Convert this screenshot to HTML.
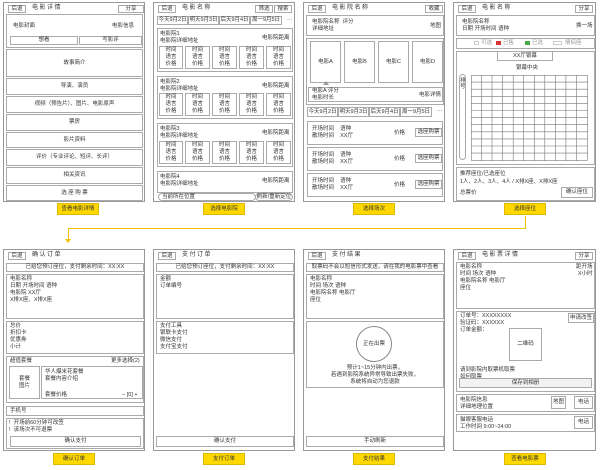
<!DOCTYPE html><html><head><meta charset="utf-8"><style>
*{margin:0;padding:0;box-sizing:border-box}
body{width:600px;height:470px;background:#fff;position:relative;overflow:hidden;font-family:"Liberation Sans","Noto Sans CJK SC",sans-serif;font-size:5.5px;color:#333;line-height:1.2}
.p{position:absolute;border:1px solid #999;background:#fff}
.a{position:absolute;white-space:nowrap}
.b{position:absolute;border:1px solid #aaa;background:#fff}
.c{display:flex;align-items:center;justify-content:center}
.t{font-size:6px;letter-spacing:1.5px;color:#333}
.lab{position:absolute;width:42px;height:12px;background:#ffd800;border:1px solid #e0b800;font-size:5.5px;display:flex;align-items:center;justify-content:center;color:#333}
.pill{border-radius:5px}
</style></head><body>

<!-- connector -->
<div class="a" style="left:525px;top:216px;width:1px;height:13px;background:#f2c300"></div>
<div class="a" style="left:68px;top:228px;width:458px;height:1px;background:#f2c300"></div>
<div class="a" style="left:68px;top:228px;width:1px;height:12px;background:#f2c300"></div>
<div class="a" style="left:65px;top:239px;width:0;height:0;border-left:3.5px solid transparent;border-right:3.5px solid transparent;border-top:4px solid #f2c300"></div>

<!-- Panel 1 -->
<div class="p" style="left:3px;top:2px;width:142px;height:200px">
<div class="b c" style="left:4px;top:2px;width:18px;height:8px">后退</div>
<div class="a t" style="left:28px;top:2px">电影详情</div>
<div class="b c" style="left:114px;top:2px;width:26px;height:8px">分享</div>
<div class="b" style="left:2px;top:11px;width:137px;height:34px"></div>
<div class="a" style="left:9px;top:20px">电影封面</div>
<div class="a" style="left:108px;top:20px">电影信息</div>
<div class="b c" style="left:6px;top:33px;width:68px;height:9px">想看</div>
<div class="b c" style="left:75px;top:33px;width:63px;height:9px">写影评</div>
<div class="b c" style="left:2px;top:46px;width:137px;height:28px">故事简介</div>
<div class="b c" style="left:2px;top:75px;width:137px;height:17px">导演、演员</div>
<div class="b c" style="left:2px;top:93px;width:137px;height:17px">视频（预告片）、图片、电影原声</div>
<div class="b c" style="left:2px;top:111px;width:137px;height:17px">票房</div>
<div class="b c" style="left:2px;top:129px;width:137px;height:16px">影片资料</div>
<div class="b c" style="left:2px;top:146px;width:137px;height:17px">评价（专业评论、短评、长评）</div>
<div class="b c" style="left:2px;top:164px;width:137px;height:17px">相关资讯</div>
<div class="b c" style="left:2px;top:182px;width:137px;height:16px">选 座 购 票</div>
</div>
<div class="lab" style="left:57px;top:203px">查看电影详情</div>

<!-- Panel 2 -->
<div class="p" style="left:153px;top:2px;width:142px;height:200px">
<div class="b c" style="left:4px;top:2px;width:18px;height:8px">后退</div>
<div class="a t" style="left:28px;top:2px">电影名称</div>
<div class="b c" style="left:101px;top:2px;width:18px;height:8px">筛选</div>
<div class="b c" style="left:120px;top:2px;width:18px;height:8px">搜索</div>
<div class="b c" style="left:3px;top:13px;width:31px;height:9px">今天9月2日</div>
<div class="b c" style="left:34px;top:13px;width:31px;height:9px">明天9月3日</div>
<div class="b c" style="left:65px;top:13px;width:31px;height:9px">后天9月4日</div>
<div class="b c" style="left:96px;top:13px;width:32px;height:9px">周一9月5日</div>
<div class="a" style="left:133px;top:14px">···</div>

<div class="b" style="left:3px;top:25px;width:136px;height:44px"></div>
<div class="a" style="left:6px;top:28px">电影院1<br>电影院详细地址</div><div class="a" style="left:108px;top:32px">电影院距离</div>
<div class="b c" style="left:5px;top:43px;width:24px;height:23px;line-height:1.25;text-align:center">时间<br>语言<br>价格</div>
<div class="b c" style="left:31px;top:43px;width:25px;height:23px;text-align:center;line-height:1.25">时间<br>语言<br>价格</div>
<div class="b c" style="left:58px;top:43px;width:25px;height:23px;text-align:center;line-height:1.25">时间<br>语言<br>价格</div>
<div class="b c" style="left:85px;top:43px;width:25px;height:23px;text-align:center;line-height:1.25">时间<br>语言<br>价格</div>
<div class="b c" style="left:112px;top:43px;width:25px;height:23px;text-align:center;line-height:1.25">时间<br>语言<br>价格</div>

<div class="b" style="left:3px;top:73px;width:136px;height:43px"></div>
<div class="a" style="left:6px;top:76px">电影院2<br>电影院详细地址</div><div class="a" style="left:108px;top:80px">电影院距离</div>
<div class="b c" style="left:5px;top:90px;width:24px;height:23px;text-align:center;line-height:1.25">时间<br>语言<br>价格</div>
<div class="b c" style="left:31px;top:90px;width:25px;height:23px;text-align:center;line-height:1.25">时间<br>语言<br>价格</div>
<div class="b c" style="left:58px;top:90px;width:25px;height:23px;text-align:center;line-height:1.25">时间<br>语言<br>价格</div>
<div class="b c" style="left:85px;top:90px;width:25px;height:23px;text-align:center;line-height:1.25">时间<br>语言<br>价格</div>
<div class="b c" style="left:112px;top:90px;width:25px;height:23px;text-align:center;line-height:1.25">时间<br>语言<br>价格</div>

<div class="b" style="left:3px;top:120px;width:136px;height:44px"></div>
<div class="a" style="left:6px;top:123px">电影院3<br>电影院详细地址</div><div class="a" style="left:108px;top:127px">电影院距离</div>
<div class="b c" style="left:5px;top:138px;width:24px;height:23px;text-align:center;line-height:1.25">时间<br>语言<br>价格</div>
<div class="b c" style="left:31px;top:138px;width:25px;height:23px;text-align:center;line-height:1.25">时间<br>语言<br>价格</div>
<div class="b c" style="left:58px;top:138px;width:25px;height:23px;text-align:center;line-height:1.25">时间<br>语言<br>价格</div>
<div class="b c" style="left:85px;top:138px;width:25px;height:23px;text-align:center;line-height:1.25">时间<br>语言<br>价格</div>
<div class="b c" style="left:112px;top:138px;width:25px;height:23px;text-align:center;line-height:1.25">时间<br>语言<br>价格</div>

<div class="b" style="left:3px;top:168px;width:136px;height:22px"></div>
<div class="a" style="left:6px;top:171px">电影院4<br>电影院详细地址</div><div class="a" style="left:108px;top:175px">电影院距离</div>
<div class="b pill c" style="left:4px;top:190px;width:98px;height:8px;justify-content:flex-start;padding-left:3px">当前所在位置</div>
<div class="b pill c" style="left:101px;top:190px;width:38px;height:8px">刷新/重新定位</div>
</div>
<div class="lab" style="left:203px;top:203px">选择电影院</div>

<!-- Panel 3 -->
<div class="p" style="left:303px;top:2px;width:142px;height:200px">
<div class="b c" style="left:4px;top:2px;width:18px;height:8px">后退</div>
<div class="a t" style="left:28px;top:2px">电影院名称</div>
<div class="b c" style="left:121px;top:2px;width:18px;height:8px">收藏</div>
<div class="b" style="left:2px;top:12px;width:138px;height:21px"></div>
<div class="a" style="left:8px;top:16px">电影院名称&nbsp;&nbsp;评分<br>详细地址</div>
<div class="a" style="left:126px;top:20px">地图</div>
<div class="b" style="left:2px;top:35px;width:138px;height:67px"></div>
<div class="b c" style="left:6px;top:38px;width:31px;height:42px">电影A</div>
<div class="b c" style="left:40px;top:38px;width:31px;height:42px">电影B</div>
<div class="b c" style="left:74px;top:38px;width:31px;height:42px">电影C</div>
<div class="b c" style="left:108px;top:38px;width:31px;height:42px">电影D</div>
<div class="a" style="left:19px;top:78px;width:0;height:0;border-left:3px solid transparent;border-right:3px solid transparent;border-bottom:4px solid #999"></div>
<div class="b" style="left:4px;top:84px;width:135px;height:15px"></div>
<div class="a" style="left:8px;top:85px">电影A 评分<br>电影时长</div>
<div class="a" style="left:115px;top:89px">电影详情</div>
<div class="b c" style="left:3px;top:104px;width:31px;height:10px">今天9月2日</div>
<div class="b c" style="left:34px;top:104px;width:31px;height:10px">明天9月3日</div>
<div class="b c" style="left:65px;top:104px;width:31px;height:10px">后天9月4日</div>
<div class="b c" style="left:96px;top:104px;width:32px;height:10px">周一9月5日</div>
<div class="a" style="left:133px;top:105px">···</div>
<div class="b" style="left:3px;top:118px;width:136px;height:24px"></div>
<div class="a" style="left:8px;top:123px">开场时间&nbsp;&nbsp;&nbsp;&nbsp;语种<br>散场时间&nbsp;&nbsp;&nbsp;&nbsp;XX厅</div><div class="a" style="left:90px;top:127px">价格</div>
<div class="b c" style="left:111px;top:125px;width:27px;height:9px">选座购票</div>
<div class="b" style="left:3px;top:144px;width:136px;height:24px"></div>
<div class="a" style="left:8px;top:149px">开场时间&nbsp;&nbsp;&nbsp;&nbsp;语种<br>散场时间&nbsp;&nbsp;&nbsp;&nbsp;XX厅</div><div class="a" style="left:90px;top:153px">价格</div>
<div class="b c" style="left:111px;top:151px;width:27px;height:9px">选座购票</div>
<div class="b" style="left:3px;top:170px;width:136px;height:24px"></div>
<div class="a" style="left:8px;top:175px">开场时间&nbsp;&nbsp;&nbsp;&nbsp;语种<br>散场时间&nbsp;&nbsp;&nbsp;&nbsp;XX厅</div><div class="a" style="left:90px;top:179px">价格</div>
<div class="b c" style="left:111px;top:177px;width:27px;height:9px">选座购票</div>
</div>
<div class="lab" style="left:353px;top:203px">选择场次</div>

<!-- Panel 4 -->
<div class="p" style="left:453px;top:2px;width:143px;height:200px">
<div class="b c" style="left:4px;top:2px;width:18px;height:8px">后退</div>
<div class="a t" style="left:28px;top:2px">电影名称</div>
<div class="b c" style="left:121px;top:2px;width:18px;height:8px">分享</div>
<div class="b" style="left:2px;top:12px;width:139px;height:21px"></div>
<div class="a" style="left:8px;top:16px">电影院名称<br>日期 开场时间 语种</div>
<div class="a" style="left:122px;top:20px">换一场</div>
<div class="b" style="left:2px;top:35px;width:139px;height:11px"></div>
<div class="a" style="left:20px;top:38px;width:5px;height:4px;border:1px solid #ccc"></div><div class="a" style="left:27px;top:37px;color:#999">可选</div>
<div class="a" style="left:42px;top:38px;width:5px;height:4px;background:#d33"></div><div class="a" style="left:49px;top:37px;color:#999">已售</div>
<div class="a" style="left:71px;top:38px;width:5px;height:4px;background:#4a4"></div><div class="a" style="left:78px;top:37px;color:#999">已选</div>
<div class="a" style="left:99px;top:38px;width:9px;height:4px;border:1px solid #ccc"></div><div class="a" style="left:111px;top:37px;color:#999">情侣座</div>
<div class="b" style="left:2px;top:48px;width:139px;height:114px"></div>
<div class="b c" style="left:43px;top:48px;width:56px;height:10px">XX厅银幕</div>
<div class="a" style="left:62px;top:62px">银幕中央</div>
<div class="b" style="left:5px;top:71px;width:7px;height:86px;border-radius:4px"></div>
<div class="a" style="left:6px;top:75px;line-height:1.1">排<br>号</div>
<svg class="a" style="left:17px;top:72px" width="117" height="86" viewBox="0 0 117 86">
<g stroke="#777" stroke-width="0.6" fill="none">
<rect x="0.3" y="0.3" width="116" height="85"/>
<path d="M10.5 0V86M21 0V86M31.6 0V86M42.2 0V86M52.7 0V86M63.3 0V86M73.8 0V86M84.4 0V86M94.9 0V86M105.5 0V86"/>
<path d="M0 7.1H117M0 14.2H117M0 21.3H117M0 28.4H117M0 35.5H117M0 42.6H117M0 49.7H117M0 56.8H117M0 63.9H117M0 71H117M0 78.1H117"/>
</g></svg>
<div class="b" style="left:2px;top:164px;width:139px;height:34px"></div>
<div class="a" style="left:6px;top:168px">推荐座位/已选座位</div>
<div class="a" style="left:6px;top:176px">1人、2人、3人、4人 / X排X座、X排X座</div>
<div class="a" style="left:6px;top:187px">总票价</div>
<div class="b c" style="left:107px;top:184px;width:32px;height:11px">确认座位</div>
</div>
<div class="lab" style="left:504px;top:203px">选择座位</div>

<!-- Panel 5 -->
<div class="p" style="left:3px;top:249px;width:142px;height:202px">
<div class="b c" style="left:4px;top:2px;width:18px;height:8px">后退</div>
<div class="a t" style="left:28px;top:2px">确认订单</div>
<div class="b c" style="left:2px;top:13px;width:138px;height:9px">已给您预订座位，支付剩余时间：XX:XX</div>
<div class="b" style="left:2px;top:24px;width:138px;height:45px"></div>
<div class="a" style="left:6px;top:26px;line-height:1.25">电影名称<br>日期 开场时间 语种<br>电影院 XX厅<br>X排X座、X排X座</div>
<div class="b" style="left:2px;top:71px;width:138px;height:33px"></div>
<div class="a" style="left:6px;top:73px;line-height:1.25">总价<br>折扣卡<br>优惠券<br>小计</div>
<div class="b" style="left:2px;top:106px;width:138px;height:47px"></div>
<div class="a" style="left:6px;top:108px">超值套餐</div><div class="a" style="left:107px;top:108px">更多选择(2)</div>
<div class="b c" style="left:5px;top:116px;width:31px;height:33px;text-align:center">套餐<br>图片</div>
<div class="b" style="left:37px;top:116px;width:102px;height:33px"></div>
<div class="a" style="left:41px;top:119px">华人爆米花套餐<br>套餐内容介绍</div>
<div class="a" style="left:41px;top:142px">套餐价格</div><div class="a" style="left:118px;top:142px">− [0] +</div>
<div class="b" style="left:2px;top:156px;width:138px;height:10px"></div>
<div class="a" style="left:6px;top:158px">手机号</div>
<div class="b" style="left:2px;top:168px;width:138px;height:31px"></div>
<div class="a" style="left:5px;top:170px">!&nbsp;&nbsp;开场前60分钟可改签<br>!&nbsp;&nbsp;该场次不可退票</div>
<div class="b c" style="left:6px;top:186px;width:131px;height:11px">确认支付</div>
</div>
<div class="lab" style="left:53px;top:453px">确认订单</div>

<!-- Panel 6 -->
<div class="p" style="left:153px;top:249px;width:142px;height:202px">
<div class="b c" style="left:4px;top:2px;width:18px;height:8px">后退</div>
<div class="a t" style="left:28px;top:2px">支付订单</div>
<div class="b c" style="left:2px;top:13px;width:138px;height:9px">已给您预订座位，支付剩余时间：XX:XX</div>
<div class="b" style="left:2px;top:24px;width:138px;height:45px"></div>
<div class="a" style="left:6px;top:26px;line-height:1.25">金额<br>订单编号</div>
<div class="b" style="left:2px;top:71px;width:138px;height:33px"></div>
<div class="a" style="left:6px;top:73px;line-height:1.25">支付工具<br>银联卡支付<br>微信支付<br>支付宝支付</div>
<div class="b c" style="left:2px;top:186px;width:138px;height:11px">确认支付</div>
</div>
<div class="lab" style="left:203px;top:453px">支付订单</div>

<!-- Panel 7 -->
<div class="p" style="left:303px;top:249px;width:142px;height:202px">
<div class="b c" style="left:4px;top:2px;width:18px;height:8px">后退</div>
<div class="a t" style="left:28px;top:2px">支付结果</div>
<div class="b c" style="left:2px;top:13px;width:138px;height:9px">取票码不会以短信形式发送，请在我的电影票中查看</div>
<div class="b" style="left:2px;top:24px;width:138px;height:45px"></div>
<div class="a" style="left:6px;top:26px;line-height:1.25">电影名称<br>时间 场次 语种<br>电影院名称 电影厅<br>座位</div>
<div class="b" style="left:2px;top:71px;width:138px;height:67px"></div>
<div class="a c" style="left:52px;top:76px;width:36px;height:36px;border:1px solid #888;border-radius:50%">正在出票</div>
<div class="a" style="left:2px;top:115px;width:138px;text-align:center;line-height:1.25">预计1~15分钟内出票，<br>若遇到影院系统异常导致出票失败，<br>系统将自动为您退款</div>
<div class="b c" style="left:2px;top:186px;width:138px;height:11px">手动刷新</div>
</div>
<div class="lab" style="left:353px;top:453px">支付结果</div>

<!-- Panel 8 -->
<div class="p" style="left:453px;top:249px;width:143px;height:202px">
<div class="b c" style="left:4px;top:2px;width:18px;height:8px">后退</div>
<div class="a t" style="left:28px;top:2px">电影票详情</div>
<div class="b c" style="left:121px;top:2px;width:18px;height:8px">分享</div>
<div class="b" style="left:2px;top:12px;width:139px;height:47px"></div>
<div class="a" style="left:6px;top:14px;line-height:1.25">电影名称<br>时间 场次 语种<br>电影院名称 电影厅<br>座位</div>
<div class="a" style="left:122px;top:14px;line-height:1.25;text-align:right">距开场<br>X小时</div>
<div class="b" style="left:2px;top:61px;width:139px;height:81px"></div>
<div class="a" style="left:6px;top:63px;line-height:1.25">订单号：XXXXXXXX<br>验证码：XXXXXX<br>订单金额：</div>
<div class="b c" style="left:114px;top:63px;width:26px;height:10px">申请改签</div>
<div class="b c" style="left:55px;top:78px;width:33px;height:33px">二维码</div>
<div class="a" style="left:6px;top:117px;line-height:1.25">请到影院内取票机取票<br>如何取票</div>
<div class="b c" style="left:5px;top:128px;width:133px;height:10px;background:#f2f2f2">保存到相册</div>
<div class="b" style="left:2px;top:144px;width:139px;height:18px"></div>
<div class="a" style="left:6px;top:147px;line-height:1.25">电影院信息<br>详细地理位置</div>
<div class="b c" style="left:97px;top:146px;width:15px;height:13px">地图</div>
<div class="b c" style="left:120px;top:146px;width:19px;height:13px">电话</div>
<div class="b" style="left:2px;top:164px;width:139px;height:18px"></div>
<div class="a" style="left:6px;top:167px;line-height:1.25">猫眼客服电话<br>工作时间 9:00~24:00</div>
<div class="b c" style="left:120px;top:166px;width:19px;height:13px">电话</div>
</div>
<div class="lab" style="left:504px;top:453px">查看电影票</div>

</body></html>
